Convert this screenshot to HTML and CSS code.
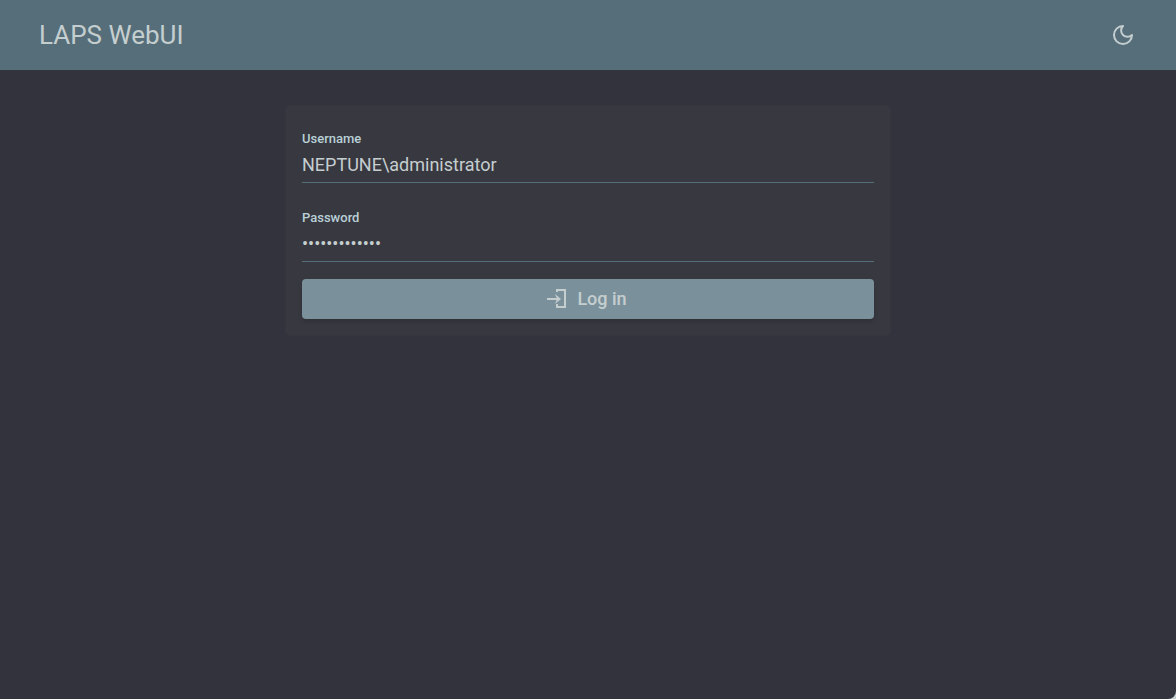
FILE: index.html
```html
<!DOCTYPE html>
<html lang="en">
  <head>
    <meta charset="utf-8">
    <meta name="viewport" content="width=device-width, initial-scale=1">
    <title>LAPS WebUI</title>
    <link rel="stylesheet" href="styles.css">
  </head>
  <body>
    <div class="app">
      <header class="app-bar">
        <h1 class="app-title">LAPS WebUI</h1>
        <button class="icon-button" type="button" aria-label="Toggle dark mode">
          <svg class="icon" viewBox="0 0 24 24" fill="none" stroke="currentColor" stroke-width="2" stroke-linejoin="round">
            <path d="M12 3a6 6 0 0 0 9 9 9 9 0 1 1-9-9Z"/>
          </svg>
        </button>
      </header>
      <main class="content">
        <form class="card">
          <div class="fields">
            <div class="field">
              <label for="username">Username</label>
              <input id="username" type="text" value="NEPTUNE\administrator" autocomplete="username" spellcheck="false">
            </div>
            <div class="field">
              <label for="password">Password</label>
              <input id="password" type="password" value="administrator" autocomplete="current-password">
            </div>
          </div>
          <button class="login-button" type="submit">
            <svg class="icon" viewBox="0 0 24 24" fill="none" stroke="currentColor" stroke-width="2">
              <path d="M12 6V4h8v17h-8v-3"/>
              <path d="M2 13h12"/>
              <path d="M10 8l6 5-6 5 2-5Z" fill="currentColor" stroke="none"/>
            </svg>
            Log in
          </button>
        </form>
      </main>
    </div>
  </body>
</html>
```
FILE: styles.css
```css
html {
  background: #c4d0d0;
}

body {
  margin: 0;
  font-family: Roboto, sans-serif;
  color: #c5cecf;
}

.app {
  min-height: 100vh;
  background: #33333d;
  border-bottom-right-radius: 8px;
}

/* Top bar */
.app-bar {
  display: flex;
  align-items: center;
  justify-content: space-between;
  height: 70px;
  padding: 0 33px 0 39px;
  background: #566e7a;
}

.app-title {
  margin: 0;
  font-size: 26px;
  font-weight: 400;
  line-height: 32px;
}

.icon {
  width: 24px;
  height: 24px;
}

.icon-button {
  display: flex;
  padding: 8px;
  border: 0;
  border-radius: 50%;
  background: none;
  color: inherit;
  cursor: pointer;
}

/* Login form */
.content {
  padding: 36px 16px;
}

.card {
  display: flex;
  flex-direction: column;
  gap: 17px;
  box-sizing: border-box;
  max-width: 604px;
  margin: 0 auto;
  padding: 16px;
  border-radius: 4px;
  background: #383840;
  box-shadow: 0 0 0 1px #36363f;
}

.fields {
  display: flex;
  flex-direction: column;
  gap: 18px;
}

.field {
  display: flex;
  flex-direction: column;
  padding-top: 8px;
  border-bottom: 1px solid #566e7a;
}

.field label {
  font-size: 13px;
  font-weight: 500;
  line-height: 18px;
  color: #b8d0d6;
}

.field input {
  box-sizing: border-box;
  height: 34px;
  padding: 0 0 2px;
  border: 0;
  outline: 0;
  background: none;
  color: inherit;
  font: 18px Roboto, sans-serif;
}

.login-button {
  display: flex;
  align-items: center;
  justify-content: center;
  gap: 8px;
  height: 40px;
  padding: 0 4px 2px 0;
  border: 0;
  border-radius: 4px;
  background: #7a919c;
  box-shadow: 0 3px 4px rgba(0, 0, 0, 0.15);
  color: inherit;
  font: 500 18px Roboto, sans-serif;
  cursor: pointer;
}
```
